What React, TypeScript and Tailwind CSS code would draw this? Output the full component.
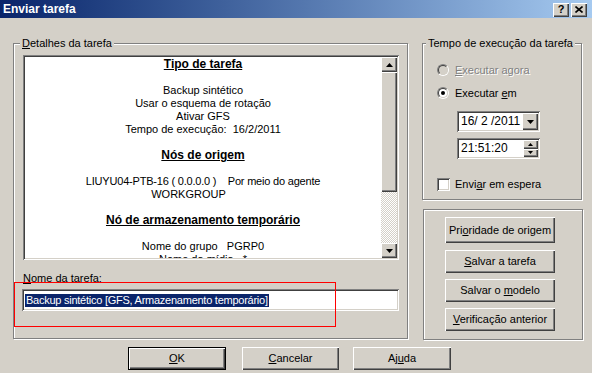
import React from "react";

// classic Win2000 3D edges
const raised = "shadow-[inset_1px_1px_#fff,inset_-1px_-1px_#404040,inset_-2px_-2px_#808080]";
const sunken = "shadow-[inset_1px_1px_#808080,inset_-1px_-1px_#fff,inset_2px_2px_#404040,inset_-2px_-2px_#d4d0c8]";
const etched = "border border-[#808080] shadow-[inset_1px_1px_#fff,1px_1px_#fff]";

const Arrow = ({ dir, small }: { dir: "up" | "down"; small?: boolean }) => {
  const w = small ? 5 : 7;
  const h = small ? 3 : 4;
  const pts = dir === "up" ? `0,${h} ${w},${h} ${w / 2},0` : `0,0 ${w},0 ${w / 2},${h}`;
  return (
    <svg width={w} height={h} viewBox={`0 0 ${w} ${h}`} className="block">
      <polygon points={pts} fill="#000" />
    </svg>
  );
};

const Radio = ({ checked, disabled }: { checked?: boolean; disabled?: boolean }) => (
  <div className="w-[12px] h-[12px] rounded-full border border-t-[#808080] border-l-[#808080] border-r-white border-b-white shrink-0">
    <div
      className={`w-full h-full rounded-full border border-t-[#404040] border-l-[#404040] border-r-[#d4d0c8] border-b-[#d4d0c8] flex items-center justify-center ${
        disabled ? "bg-[#d4d0c8]" : "bg-white"
      }`}
    >
      {checked && <div className="w-[4px] h-[4px] rounded-full bg-black" />}
    </div>
  </div>
);

const Btn = ({ children, className = "" }: { children: React.ReactNode; className?: string }) => (
  <div className={`flex items-center justify-center bg-[#d4d0c8] ${raised} ${className}`}>{children}</div>
);

export default function App() {
  return (
    <div className="relative w-[592px] h-[373px] bg-[#d4d0c8] text-black text-[11px] leading-[13px] font-['Liberation_Sans',Arial,sans-serif] overflow-hidden">
      {/* title bar */}
      <div className="h-[18px] flex items-center justify-between bg-linear-to-r from-[#0a246a] to-[#a6caf0] pl-[3px] pr-[5px]">
        <span className="text-white font-bold text-[12px]">Enviar tarefa</span>
        <div className="flex gap-[2px] pt-[1px]">
          <Btn className="w-[16px] h-[14px]">
            <span className="font-bold text-[11px] leading-none">?</span>
          </Btn>
          <Btn className="w-[16px] h-[14px]">
            <svg width="8" height="7" viewBox="0 0 8 7">
              <path d="M0.5 0.5 L7.5 6.5 M7.5 0.5 L0.5 6.5" stroke="#000" strokeWidth="1.6" />
            </svg>
          </Btn>
        </div>
      </div>

      <div className="flex gap-[14px] pl-[13px] pt-[25px]">
        {/* Detalhes da tarefa */}
        <div className={`relative w-[395px] h-[296px] ${etched} pt-[11px] pl-[9px] pr-[8px]`}>
          <span className="absolute -top-[7px] left-[6px] px-[2px] bg-[#d4d0c8]">
            <u>D</u>etalhes da tarefa
          </span>
          <div className={`h-[205px] flex bg-white p-[2px] ${sunken}`}>
            <div className="flex-1 overflow-hidden text-center pt-[1px] whitespace-pre">
              <div className="font-bold underline text-[12px]">Tipo de tarefa</div>
              <div>&nbsp;</div>
              <div>Backup sintético</div>
              <div>Usar o esquema de rotação</div>
              <div>Ativar GFS</div>
              <div>Tempo de execução:  16/2/2011</div>
              <div>&nbsp;</div>
              <div className="font-bold underline text-[12px]">Nós de origem</div>
              <div>&nbsp;</div>
              <div className="tracking-[-0.2px]">LIUYU04-PTB-16 ( 0.0.0.0 )    Por meio do agente</div>
              <div className="pr-[29px]">WORKGROUP</div>
              <div>&nbsp;</div>
              <div className="font-bold underline text-[12px]">Nó de armazenamento temporário</div>
              <div>&nbsp;</div>
              <div>Nome do grupo   PGRP0</div>
              <div>Nome da mídia   *</div>
            </div>
            {/* scrollbar */}
            <div className="w-[16px] flex flex-col">
              <Btn className="h-[15px]">
                <Arrow dir="up" />
              </Btn>
              <Btn className="h-[120px]">{null}</Btn>
              <div className="flex-1 bg-[repeating-conic-gradient(#ffffff_0_25%,#d4d0c8_0_50%)] bg-size-[2px_2px]" />
              <Btn className="h-[15px]">
                <Arrow dir="down" />
              </Btn>
            </div>
          </div>
          <div className="mt-[12px]">
            <u>N</u>ome da tarefa:
          </div>
          <div className={`mt-[4px] -ml-px h-[22px] bg-white ${sunken} flex items-center pl-[3px]`}>
            <span className="bg-[#0a246a] text-white px-px leading-[13px] tracking-[-0.25px]">
              Backup sintético [GFS, Armazenamento temporário]
            </span>
          </div>
        </div>

        {/* right column */}
        <div className="flex flex-col gap-[9px] w-[161px]">
          <div className={`relative w-[160px] h-[157px] ${etched} pl-[14px] pt-[20px] flex flex-col`}>
            <span className="absolute -top-[7px] left-[3px] px-[2px] bg-[#d4d0c8] whitespace-nowrap">
              Tempo de execução da tarefa
            </span>
            <div className="h-[12px] flex items-center gap-[6px]">
              <Radio disabled />
              <span className="text-[#808080] [text-shadow:1px_1px_0_#fff]">
                <u>E</u>xecutar agora
              </span>
            </div>
            <div className="h-[12px] mt-[11px] flex items-center gap-[6px]">
              <Radio checked />
              <span>
                Executar <u>e</u>m
              </span>
            </div>
            <div className={`ml-[20px] mt-[12px] w-[83px] h-[21px] bg-white ${sunken} flex items-stretch p-[2px]`}>
              <span className="flex-1 flex items-center pl-[2px] text-[12px] whitespace-pre">16/ 2 /2011</span>
              <Btn className="w-[16px]">
                <Arrow dir="down" />
              </Btn>
            </div>
            <div className={`ml-[20px] mt-[6px] w-[83px] h-[21px] bg-white ${sunken} flex items-stretch p-[2px]`}>
              <span className="flex-1 flex items-center pl-[2px] text-[12px]">21:51:20</span>
              <div className="w-[15px] flex flex-col">
                <Btn className="flex-1">
                  <Arrow dir="up" small />
                </Btn>
                <Btn className="flex-1">
                  <Arrow dir="down" small />
                </Btn>
              </div>
            </div>
            <div className="h-[13px] mt-[19px] flex items-center gap-[5px]">
              <div className={`w-[13px] h-[13px] bg-white ${sunken}`} />
              <span>
                Envi<u>a</u>r em espera
              </span>
            </div>
          </div>

          <div className={`w-[160px] h-[131px] ml-px ${etched} pl-[21px] pt-[7px] flex flex-col`}>
            <Btn className="w-[110px] h-[26px]">
              <span>
                Pri<u>o</u>ridade de origem
              </span>
            </Btn>
            <Btn className="w-[110px] h-[23px] mt-[7px]">
              <span>
                <u>S</u>alvar a tarefa
              </span>
            </Btn>
            <Btn className="w-[110px] h-[23px] mt-[6px]">
              <span>
                Salvar o <u>m</u>odelo
              </span>
            </Btn>
            <Btn className="w-[110px] h-[23px] mt-[6px]">
              <span>
                <u>V</u>erificação anterior
              </span>
            </Btn>
          </div>
        </div>
      </div>

      {/* dialog buttons */}
      <div className="flex mt-[7px] pl-[128px]">
        <div className="w-[98px] h-[23px] border border-black">
          <Btn className="w-full h-full">
            <span>
              <u>O</u>K
            </span>
          </Btn>
        </div>
        <Btn className="w-[97px] h-[23px] ml-[16px]">
          <span>
            <u>C</u>ancelar
          </span>
        </Btn>
        <Btn className="w-[98px] h-[23px] ml-[14px]">
          <span>
            Aj<u>u</u>da
          </span>
        </Btn>
      </div>

      {/* red annotation frame */}
      <div className="absolute left-[14px] top-[282px] w-[322px] h-[45px] border border-[#ff0000] pointer-events-none" />
    </div>
  );
}
